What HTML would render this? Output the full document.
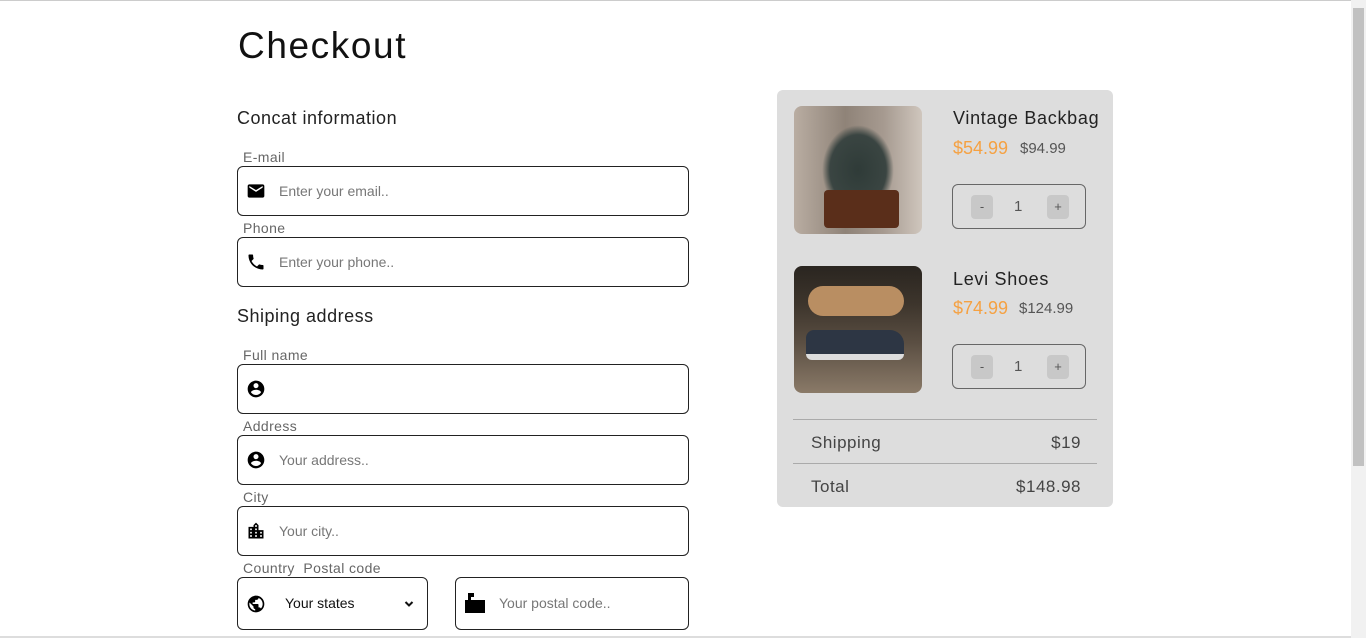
<!DOCTYPE html>
<html><head><meta charset="utf-8"><style>
*{box-sizing:border-box;margin:0;padding:0}
body{width:1366px;height:638px;overflow:hidden;background:#fff;font-family:"Liberation Sans",sans-serif;position:relative}
.a{position:absolute}
.h{font-size:18px;color:#222;letter-spacing:0.5px}
.lbl{font-size:14px;color:#666;letter-spacing:0.4px}
.box{position:absolute;border:1px solid #222;border-radius:6px;background:#fff}
.ph{position:absolute;left:41px;top:0;line-height:48px;font-size:14px;color:#777}
.ic{position:absolute;left:8px;top:14px;width:20px;height:20px}
.panel{position:absolute;left:777px;top:90px;width:336px;height:417px;background:#ddd;border-radius:6px}
.t{font-size:18px;color:#222;letter-spacing:0.7px}
.pr{font-size:18px;color:#f5a142}
.old{font-size:15px;color:#555}
.qty{position:absolute;width:134px;height:45px;border:1px solid #666;border-radius:6px}
.b{position:absolute;top:10px;width:22px;height:24px;background:#c8c8c8;border-radius:4px;font-size:13px;color:#555;text-align:center;line-height:24px}
.n{position:absolute;left:61px;top:0;line-height:43px;font-size:15px;color:#555}
.line{position:absolute;left:16px;width:304px;height:1px;background:#aaa}
.row{position:absolute;left:34px;width:270px;font-size:17px;color:#444;display:flex;justify-content:space-between;letter-spacing:0.5px}
</style></head><body>
<div class="a" style="left:0;top:0;width:1366px;height:1px;background:#ccc"></div>
<div class="a" style="left:1351px;top:0;width:15px;height:638px;background:#f1f1f1"></div>
<div class="a" style="left:1353px;top:8px;width:11px;height:458px;background:#c1c1c1"></div>
<div class="a" style="left:0;top:636px;width:1351px;height:2px;background:#ddd"></div>

<div class="a" style="left:238px;top:25px;font-size:37px;color:#111;letter-spacing:1.6px">Checkout</div>
<div class="a h" style="left:237px;top:108px">Concat information</div>
<div class="a lbl" style="left:243px;top:149px">E-mail</div>
<div class="box" style="left:237px;top:166px;width:452px;height:50px">
<svg class="ic" viewBox="0 0 24 24"><path d="M20 4H4c-1.1 0-2 .9-2 2v12c0 1.1.9 2 2 2h16c1.1 0 2-.9 2-2V6c0-1.1-.9-2-2-2zm0 4l-8 5-8-5V6l8 5 8-5v2z"/></svg>
<div class="ph">Enter your email..</div></div>
<div class="a lbl" style="left:243px;top:220px">Phone</div>
<div class="box" style="left:237px;top:237px;width:452px;height:50px">
<svg class="ic" viewBox="0 0 24 24"><path d="M6.6 10.8c1.4 2.8 3.8 5.1 6.6 6.6l2.2-2.2c.3-.3.7-.4 1-.2 1.1.4 2.3.6 3.6.6.6 0 1 .4 1 1V20c0 .6-.4 1-1 1C10.6 21 3 13.4 3 4c0-.6.4-1 1-1h3.5c.6 0 1 .4 1 1 0 1.3.2 2.5.6 3.6.1.3 0 .7-.2 1L6.6 10.8z"/></svg>
<div class="ph">Enter your phone..</div></div>

<div class="a h" style="left:237px;top:306px">Shiping address</div>
<div class="a lbl" style="left:243px;top:347px">Full name</div>
<div class="box" style="left:237px;top:364px;width:452px;height:50px">
<svg class="ic" viewBox="0 0 24 24"><path d="M12 2C6.5 2 2 6.5 2 12s4.5 10 10 10 10-4.5 10-10S17.5 2 12 2zm0 3c1.7 0 3 1.3 3 3s-1.3 3-3 3-3-1.3-3-3 1.3-3 3-3zm0 14.2c-2.5 0-4.700-1.3-6-3.2 0-2 4-3.1 6-3.1s6 1.1 6 3.1c-1.3 1.9-3.5 3.2-6 3.2z"/></svg></div>
<div class="a lbl" style="left:243px;top:418px">Address</div>
<div class="box" style="left:237px;top:435px;width:452px;height:50px">
<svg class="ic" viewBox="0 0 24 24"><path d="M12 2C6.5 2 2 6.5 2 12s4.5 10 10 10 10-4.5 10-10S17.5 2 12 2zm0 3c1.7 0 3 1.3 3 3s-1.3 3-3 3-3-1.3-3-3 1.3-3 3-3zm0 14.2c-2.5 0-4.7-1.3-6-3.2 0-2 4-3.1 6-3.1s6 1.1 6 3.1c-1.3 1.9-3.5 3.2-6 3.2z"/></svg>
<div class="ph">Your address..</div></div>
<div class="a lbl" style="left:243px;top:489px">City</div>
<div class="box" style="left:237px;top:506px;width:452px;height:50px">
<svg class="ic" viewBox="0 0 24 24"><path d="M15 11V5l-3-3-3 3v2H3v14h18V11h-6zm-8 8H5v-2h2v2zm0-4H5v-2h2v2zm0-4H5V9h2v2zm6 8h-2v-2h2v2zm0-4h-2v-2h2v2zm0-4h-2V9h2v2zm0-4h-2V5h2v2zm6 12h-2v-2h2v2zm0-4h-2v-2h2v2z"/></svg>
<div class="ph">Your city..</div></div>
<div class="a lbl" style="left:243px;top:560px">Country&nbsp; Postal code</div>
<div class="box" style="left:237px;top:577px;width:191px;height:53px">
<svg class="ic" style="top:16px" viewBox="0 0 24 24"><path d="M12 2C6.5 2 2 6.5 2 12s4.5 10 10 10 10-4.5 10-10S17.5 2 12 2zm-1 17.9c-4-.5-7-3.9-7-7.9 0-.6.1-1.2.2-1.8L9 15v1c0 1.1.9 2 2 2v1.9zm6.9-2.5c-.3-.8-1-1.4-1.9-1.4h-1v-3c0-.6-.4-1-1-1H8v-2h2c.6 0 1-.4 1-1V7h2c1.1 0 2-.9 2-2v-.4c2.9 1.2 5 4.1 5 7.4 0 2.1-.8 4-2.1 5.4z"/></svg>
<div class="a" style="left:47px;top:0;line-height:51px;font-size:14px;color:#111">Your states</div>
<svg class="a" style="left:166px;top:21px" width="10" height="10" viewBox="0 0 10 10"><path d="M1.5 3l3.5 3.5L8.5 3" stroke="#111" stroke-width="2" fill="none"/></svg></div>
<div class="box" style="left:455px;top:577px;width:234px;height:53px">
<svg class="ic" style="left:7px;top:13px;width:24px;height:24px" viewBox="0 0 24 24"><path d="M5 2h6v4H8v3h14v13H2V9h3z"/></svg>
<div class="ph" style="left:43px;line-height:51px">Your postal code..</div></div>

<div class="panel">
<div class="a" style="left:17px;top:16px;width:128px;height:128px;border-radius:8px;background:radial-gradient(ellipse 40% 50% at 50% 50%,#2f3b38 0,#3a4542 55%,transparent 70%),linear-gradient(90deg,#b9ada2,#8f8378 40%,#a69a90 70%,#cfc6bd)"></div>
<div class="a" style="left:47px;top:100px;width:75px;height:38px;background:#5a2e1a;border-radius:4px"></div>
<div class="a t" style="left:176px;top:18px">Vintage Backbag</div>
<div class="a pr" style="left:176px;top:48px">$54.99</div>
<div class="a old" style="left:243px;top:50px">$94.99</div>
<div class="qty" style="left:175px;top:94px"><div class="b" style="left:18px">-</div><div class="n">1</div><div class="b" style="left:94px">+</div></div>

<div class="a" style="left:17px;top:176px;width:128px;height:127px;border-radius:8px;background:linear-gradient(180deg,#2a2520 0,#3d352c 30%,#5a4e42 60%,#8a7a68 100%)"></div>
<div class="a" style="left:31px;top:196px;width:96px;height:30px;border-radius:20px;background:#b98e62"></div>
<div class="a" style="left:29px;top:240px;width:98px;height:30px;border-radius:8px 14px 6px 6px;background:#2d3644;border-bottom:6px solid #ddd"></div>
<div class="a t" style="left:176px;top:179px">Levi Shoes</div>
<div class="a pr" style="left:176px;top:208px">$74.99</div>
<div class="a old" style="left:242px;top:210px">$124.99</div>
<div class="qty" style="left:175px;top:254px"><div class="b" style="left:18px">-</div><div class="n">1</div><div class="b" style="left:94px">+</div></div>

<div class="line" style="top:329px"></div>
<div class="row" style="top:343px"><span>Shipping</span><span>$19</span></div>
<div class="line" style="top:373px"></div>
<div class="row" style="top:387px"><span>Total</span><span>$148.98</span></div>
</div>
</body></html>
